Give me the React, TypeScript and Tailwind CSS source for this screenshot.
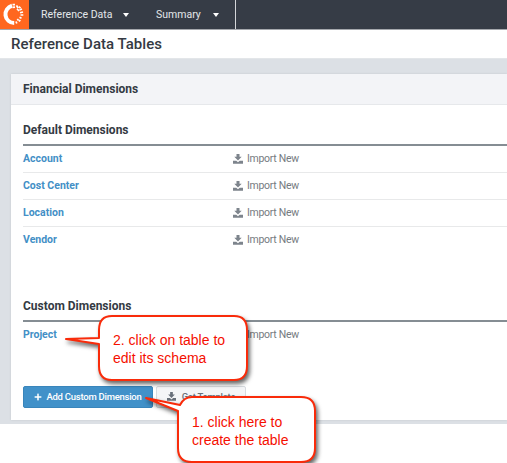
/* Reference Data Tables page with the two walkthrough callouts */
import { FaPlus } from 'react-icons/fa';

const defaultDimensions = ['Account', 'Cost Center', 'Location', 'Vendor'];
const customDimensions = ['Project'];

function Logo() {
    return (
        <div className="w-[29px] h-[29px] bg-[#ff671f] shrink-0">
            <svg viewBox="0 0 29 29" className="w-full h-full" fill="none" stroke="#fff">
                <path d="M12 5.8a8.8 8.8 0 0 0 2.2 17.3" strokeWidth="4" />
                <path d="M12.5 4.7h2.5M12.5 7.3l2.5-.2M16.5 5.4l1.5 2.6M18.8 6.6l1.8 1.5" strokeWidth="1.8" />
                <path d="M17 8.8l2 2.2M19.5 10l2.5-1M20 12.8l3-.8M20.5 15h2.8M19.5 17.2l2 1" strokeWidth="1.6" />
                <path d="M17.3 19l1.2 1.6M20.3 20l-1.3 1.5M16 21.5l.8 2" strokeWidth="1.7" />
            </svg>
        </div>
    );
}

function ImportIcon({ className }: { className: string }) {
    return (
        <svg viewBox="0 0 10 10" className={`shrink-0 ${className}`} fill="currentColor">
            <path d="M3.5 0h3v2.7h2.2L5 6.6 1.300 2.7h2.2z" />
            <path d="M0 6.700h3.300L5 8.200l1.700-1.500H10v3.100H0z" />
        </svg>
    );
}

function NavItem({ label, className }: { label: string; className: string }) {
    return (
        <div className={`flex items-center justify-between text-[10.5px] text-[#e4e7ea] ${className}`}>
            <span>{label}</span>
            <span className="border-x-[3.5px] border-x-transparent border-t-[4px] border-t-white" />
        </div>
    );
}

function DimensionTable({ title, rows, className }: { title: string; rows: string[]; className: string }) {
    return (
        <section className={className}>
            <h3 className="h-[23px] text-[12px] leading-[18px] font-bold text-[#343a43]">{title}</h3>
            <div className="border-t-2 border-[#858d93]">
                {rows.map((name) => (
                    <div key={name} className="h-[27px] flex items-center border-b border-[#e8e9ea] text-[10.5px] last:border-b-transparent">
                        <a className="w-[210px] font-bold text-[#438fc6]">{name}</a>
                        <ImportIcon className="w-[10px] h-[10px] mr-[4px] mb-px text-[#7d848c]" />
                        <span className="tracking-[-0.3px] text-[#767b81]">Import New</span>
                    </div>
                ))}
            </div>
        </section>
    );
}

export default function App() {
    return (
        <div className="relative w-[507px] h-[463px] overflow-hidden bg-white font-['Roboto',sans-serif]">
            <header className="h-[30px] flex bg-[#363c46] border-b border-[#a5a8ad]">
                <Logo />
                <NavItem label="Reference Data" className="ml-[12px] w-[88px]" />
                <NavItem label="Summary" className="ml-[27px] w-[63px]" />
                <div className="ml-[16px] w-px bg-[#d4d6d9]" />
            </header>
            <h1 className="h-[29px] pl-[11px] text-[15px] leading-[28px] tracking-[0.03px] font-medium text-[#343a43] border-b border-[#e3e6e9]">
                Reference Data Tables
            </h1>

            <main className="h-[365px] pt-[15px] pl-[11px] bg-[#dce0e5]">
                <div className="h-[346px] bg-white shadow-[0_0_2px_#c3c7cc]">
                    <h2 className="h-[31px] pl-[12px] text-[12px] leading-[31px] font-bold text-[#343a43] bg-[#f3f4f7] border-b border-[#e6e8eb]">
                        Financial Dimensions
                    </h2>
                    <div className="pl-[12px] pt-[16px]">
                        <DimensionTable title="Default Dimensions" rows={defaultDimensions} className="h-[176px]" />
                        <DimensionTable title="Custom Dimensions" rows={customDimensions} className="h-[89px]" />
                        <div className="flex gap-[3px] text-[9.5px] tracking-[-0.25px] font-medium whitespace-nowrap">
                            <button className="w-[130px] h-[22px] flex items-center justify-center gap-[4px] rounded-[2px] bg-[#4191c9] border border-[#3985bb] text-white">
                                <FaPlus className="w-[8px] h-[8px]" />
                                Add Custom Dimension
                            </button>
                            <button className="w-[90px] h-[22px] flex items-center justify-center gap-[6px] rounded-[2px] bg-[#f4f5f7] border border-[#d7dbdf] text-[#68707a]">
                                <ImportIcon className="w-[9px] h-[9px] mb-px" />
                                Get Template
                            </button>
                        </div>
                    </div>
                </div>
            </main>

            {/* Callout bubbles over the page */}
            <svg className="absolute inset-0 drop-shadow-[2px_3px_2px_rgba(0,0,0,0.6)]" width="507" height="463" fill="#fff" stroke="#f92b0a" strokeWidth="2" strokeLinejoin="round">
                <path d="M112 316H234Q247 316 247 330V366Q247 380 234 380H112Q99 380 99 366V344L66 339L99 338V330Q99 316 112 316Z" />
                <path d="M192 397H301Q315 397 315 411V448Q315 462 301 462H192Q178 462 178 448V411L146 398L180 405Q184 397 192 397Z" />
            </svg>
            <p className="absolute left-[113px] top-[331px] w-[130px] font-['Liberation_Sans',sans-serif] text-[14px] leading-[18px] text-[#f50f00]">
                2. click on table to
                <br />
                edit its schema
            </p>
            <p className="absolute left-[192px] top-[413px] w-[120px] font-['Liberation_Sans',sans-serif] text-[14px] leading-[18px] text-[#f50f00]">
                1. click here to
                <br />
                create the table
            </p>
        </div>
    );
}
